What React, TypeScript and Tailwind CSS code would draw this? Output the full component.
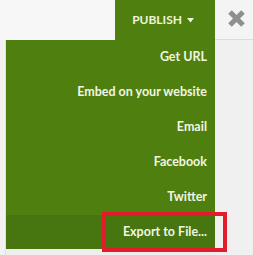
import React from "react";

const items = ["Get URL", "Embed on your website", "Email", "Facebook", "Twitter"];

export default function App() {
  return (
    <div
      className="w-[253px] h-[255px] overflow-hidden bg-[#eeeeee] flex flex-col"
      style={{ fontFamily: "Lato, 'Open Sans', sans-serif" }}
    >
      {/* header */}
      <div className="flex h-[40px] shrink-0">
        <div className="w-[115px] bg-[#f7f7f7]" />
        <div className="w-[100px] bg-[#4f800f] flex items-center justify-end pr-[21px] gap-[5px] text-[#eef3dc] text-[12px] font-bold">
          <span>PUBLISH</span>
          <svg width="7" height="5" viewBox="0 0 7 5">
            <path d="M0 0 L7 0 L3.5 4.5 Z" fill="#eef3dc" />
          </svg>
        </div>
        <div className="flex-1 bg-[#f4f4f4] border-b border-[#dcdcdc] flex items-center justify-center">
          <svg width="19" height="19" viewBox="0 0 19 19" className="mb-[2px] ml-[4px]">
            <path d="M3 3 L16 16 M16 3 L3 16" stroke="#8f8f8f" strokeWidth="5" strokeLinecap="butt" />
          </svg>
        </div>
      </div>
      {/* body */}
      <div className="flex flex-1 relative">
        <div className="w-[6px] bg-[#f2f2f2] border-r border-[#e0e0e0]" />
        <div className="w-[209px] h-[209px] bg-[#4f800f] flex flex-col">
          {items.map((t) => (
            <div
              key={t}
              className="h-[35px] flex items-center justify-end pr-[8px] text-[#f1f5e2] text-[12.5px] font-bold"
            >
              {t}
            </div>
          ))}
          <div className="h-[34px] bg-[#477510] flex items-center justify-end pr-[8px] text-[#f1f5e2] text-[12.5px] font-bold">
            Export to File...
          </div>
        </div>
        <div className="flex-1 bg-[#f0f0f0]" />
        <div className="absolute left-[102px] top-[172px] w-[125px] h-[40px] border-[4px] border-[#e31b2a]" />
      </div>
    </div>
  );
}
